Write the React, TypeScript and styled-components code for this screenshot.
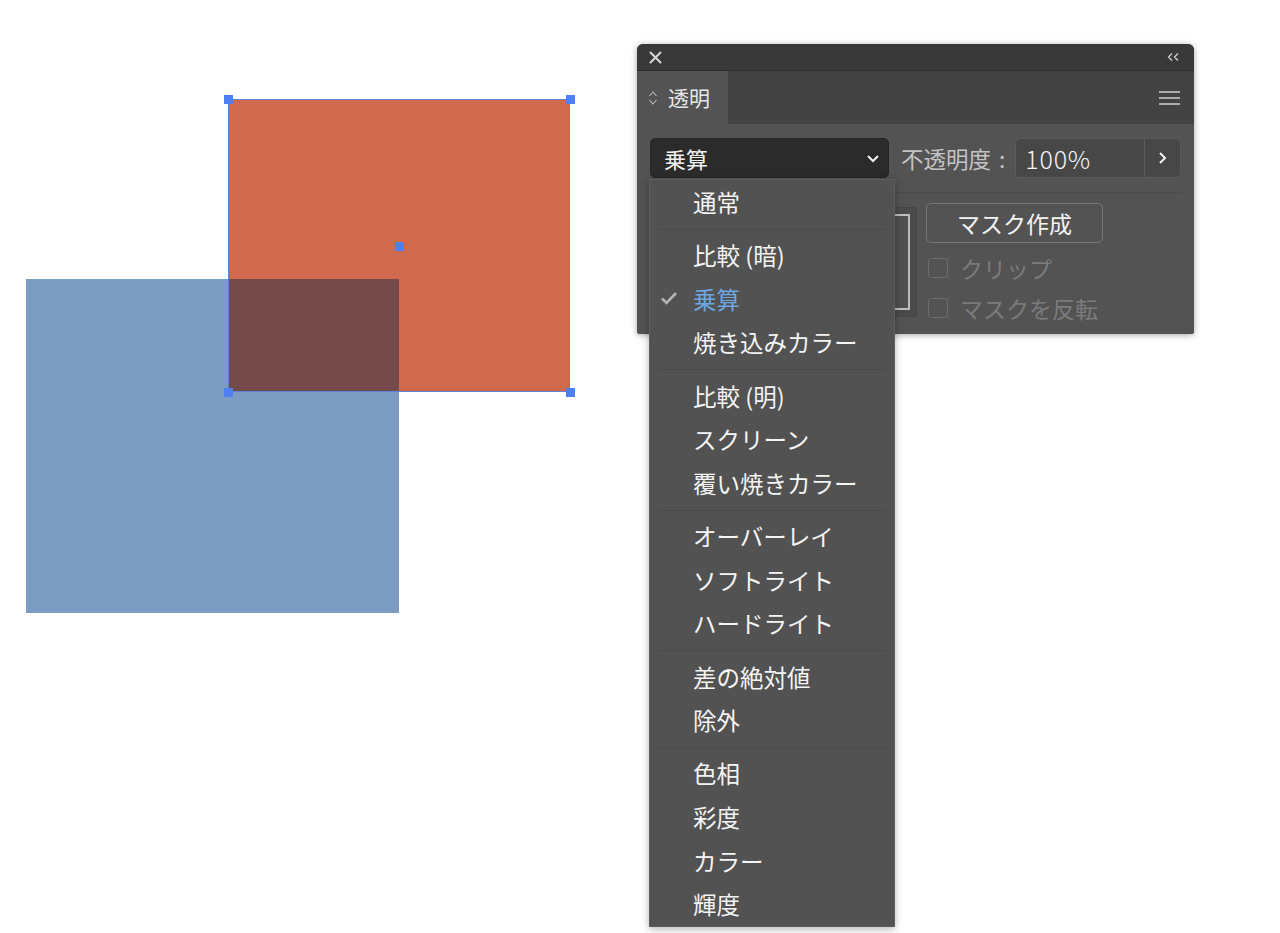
import React from "react";
import styled, { createGlobalStyle } from "styled-components";

const GlobalStyle = createGlobalStyle`
    html, body {
        margin: 0;
        padding: 0;
        background: #ffffff;
    }

    body {
        font-family: "Noto Sans CJK JP", "Noto Sans", sans-serif;
    }
`;

const modes: string[][] = [
    ["通常"],
    ["比較 (暗)", "乗算", "焼き込みカラー"],
    ["比較 (明)", "スクリーン", "覆い焼きカラー"],
    ["オーバーレイ", "ソフトライト", "ハードライト"],
    ["差の絶対値", "除外"],
    ["色相", "彩度", "カラー", "輝度"],
];

const selected = "乗算";

export default function App() {
    return (
        <>
            <GlobalStyle />
            <Canvas>
                <Shape $x={26} $y={279} $w={373} $h={334} $color="#7c9dc1" />
                <Shape $x={229} $y={100} $w={340} $h={291} $color="#cf6a4e" />
                <Shape $x={229} $y={279} $w={170} $h={112} $color="#744a4a" />

                <Selection>
                    <Handle $left="0%" $top="0%" />
                    <Handle $left="100%" $top="0%" />
                    <Handle $left="0%" $top="100%" />
                    <Handle $left="100%" $top="100%" />
                    <Handle $left="50%" $top="50%" />
                </Selection>

                <Panel>
                    <TitleBar>
                        <svg width="13" height="13" viewBox="0 0 13 13">
                            <path d="M1.5 1.5 L11.5 11.5 M11.5 1.5 L1.5 11.5" stroke="#d8d8d8" strokeWidth="2" strokeLinecap="round" />
                        </svg>
                        <svg width="14" height="10" viewBox="0 0 14 10">
                            <path d="M6 1.5 L2.5 5 L6 8.5 M12 1.5 L8.5 5 L12 8.5" stroke="#cfcfcf" strokeWidth="1.3" fill="none" />
                        </svg>
                    </TitleBar>

                    <TabRow>
                        <Tab>
                            <svg width="10" height="18" viewBox="0 0 10 18">
                                <path d="M1.5 7 L5 3 L8.5 7 M1.5 11 L5 15 L8.5 11" stroke="#bdbdbd" strokeWidth="1.1" fill="none" />
                            </svg>
                            透明
                        </Tab>
                        <MenuIcon width="21" height="16" viewBox="0 0 21 16">
                            <path d="M0 2 H21 M0 8 H21 M0 14 H21" stroke="#cfcfcf" strokeWidth="1.6" />
                        </MenuIcon>
                    </TabRow>

                    <Body>
                        <ControlRow>
                            <Select>
                                乗算
                                <svg width="14" height="9" viewBox="0 0 14 9">
                                    <path d="M2 2 L7 7 L12 2" stroke="#f2f2f2" strokeWidth="2" fill="none" />
                                </svg>
                            </Select>
                            <Label>不透明度 :</Label>
                            <InputGroup>
                                <Input>100%</Input>
                                <StepButton>
                                    <svg width="9" height="14" viewBox="0 0 9 14">
                                        <path d="M2 2 L7 7 L2 12" stroke="#f2f2f2" strokeWidth="2" fill="none" />
                                    </svg>
                                </StepButton>
                            </InputGroup>
                        </ControlRow>

                        <Divider />

                        <MaskRow>
                            <Thumb>
                                <ThumbInner />
                            </Thumb>
                            <Thumb>
                                <ThumbInner />
                            </Thumb>
                            <MaskControls>
                                <MaskButton>マスク作成</MaskButton>
                                <Check>
                                    <Box />
                                    クリップ
                                </Check>
                                <Check>
                                    <Box />
                                    マスクを反転
                                </Check>
                            </MaskControls>
                        </MaskRow>
                    </Body>
                </Panel>

                <Menu>
                    {modes.map((group, gi) => (
                        <React.Fragment key={gi}>
                            {gi > 0 && <Separator />}
                            {group.map((mode) => (
                                <Item key={mode} $active={mode === selected}>
                                    {mode === selected && (
                                        <CheckMark width="18" height="14" viewBox="0 0 18 14">
                                            <path d="M2 7.5 L6.5 12 L16 2" stroke="#b4b4b4" strokeWidth="2.6" fill="none" />
                                        </CheckMark>
                                    )}
                                    {mode}
                                </Item>
                            ))}
                        </React.Fragment>
                    ))}
                </Menu>
            </Canvas>
        </>
    );
}

const Canvas = styled.div`
    position: relative;
    width: 1280px;
    height: 933px;
    overflow: hidden;
    background: #ffffff;
`;

const Shape = styled.div<{ $x: number; $y: number; $w: number; $h: number; $color: string }>`
    position: absolute;
    left: ${(p) => p.$x}px;
    top: ${(p) => p.$y}px;
    width: ${(p) => p.$w}px;
    height: ${(p) => p.$h}px;
    background: ${(p) => p.$color};
`;

const Selection = styled.div`
    position: absolute;
    left: 228px;
    top: 99px;
    width: 342px;
    height: 293px;
    box-shadow: inset 0 0 0 1px #5f82d6;
`;

const Handle = styled.div<{ $left: string; $top: string }>`
    position: absolute;
    left: ${(p) => p.$left};
    top: ${(p) => p.$top};
    width: 9px;
    height: 9px;
    margin: -4px 0 0 -4px;
    background: #4e80f4;
`;

const Panel = styled.div`
    position: absolute;
    left: 637px;
    top: 44px;
    width: 557px;
    height: 290px;

    display: flex;
    flex-direction: column;

    background: #535353;
    border-radius: 6px 6px 2px 2px;
    overflow: hidden;
    box-shadow: 0 1px 6px rgba(0, 0, 0, 0.35);
`;

const TitleBar = styled.div`
    height: 26px;
    flex-shrink: 0;

    display: flex;
    align-items: center;
    justify-content: space-between;

    padding: 0 14px 0 12px;
    background: #393939;
    border-bottom: 1px solid #2c2c2c;
`;

const TabRow = styled.div`
    height: 53px;
    flex-shrink: 0;

    display: flex;
    align-items: stretch;
    justify-content: space-between;

    background: #434343;
`;

const Tab = styled.div`
    width: 91px;

    display: flex;
    align-items: center;
    gap: 10px;

    padding-left: 11px;
    box-sizing: border-box;

    background: #535353;
    color: #e6e6e6;
    font-size: 21px;
    line-height: 1;
`;

const MenuIcon = styled.svg`
    align-self: center;
    margin-right: 14px;
`;

const Body = styled.div`
    flex: 1;
    padding: 14px 13px 0 13px;
`;

const ControlRow = styled.div`
    display: flex;
    align-items: center;
    height: 40px;
`;

const Select = styled.div`
    width: 239px;
    height: 40px;
    box-sizing: border-box;

    display: flex;
    align-items: center;
    justify-content: space-between;

    padding: 0 8px 0 13px;
    background: #2b2b2b;
    border: 1px solid #262626;
    border-radius: 5px;

    color: #f0f0f0;
    font-size: 22px;
`;

const Label = styled.div`
    margin: 0 10px 0 12px;
    color: #c4c4c4;
    font-size: 22.5px;
    word-spacing: 3px;
    white-space: nowrap;
`;

const InputGroup = styled.div`
    flex: 1;
    height: 40px;
    display: flex;

    border: 1px solid #5c5c5c;
    border-radius: 5px;
    background: #474747;
    box-sizing: border-box;
    overflow: hidden;
`;

const Input = styled.div`
    flex: 1;
    display: flex;
    align-items: center;
    padding-left: 9px;

    color: #f4f4f4;
    font-size: 25px;
    font-weight: 300;
    letter-spacing: 0.8px;
    border-right: 1px solid #5c5c5c;
`;

const StepButton = styled.div`
    width: 35px;
    display: flex;
    align-items: center;
    justify-content: center;
`;

const Divider = styled.div`
    height: 1px;
    margin-top: 14px;
    background: #4b4b4b;
`;

const MaskRow = styled.div`
    display: flex;
    align-items: flex-start;
    margin-top: 10px;
`;

const Thumb = styled.div`
    width: 110px;
    height: 110px;
    box-sizing: border-box;
    padding: 6px;
    margin-top: 4px;
    margin-right: 47px;

    background: #4a4a4a;
    border: 1px solid #454545;
    border-radius: 2px;

    &:nth-child(2) {
        margin-right: 9px;
    }
`;

const ThumbInner = styled.div`
    width: 100%;
    height: 100%;
    box-sizing: border-box;
    border: 2px solid #bcbcbc;
    background: #4f4f4f;
`;

const MaskControls = styled.div`
    display: flex;
    flex-direction: column;
    align-items: flex-start;
`;

const MaskButton = styled.div`
    width: 177px;
    height: 40px;
    box-sizing: border-box;
    margin-bottom: 5px;

    display: flex;
    align-items: center;
    justify-content: center;

    border: 1px solid #777777;
    border-radius: 5px;
    color: #f2f2f2;
    font-size: 23px;
`;

const Check = styled.div`
    height: 40px;
    display: flex;
    align-items: center;
    gap: 12px;

    padding-left: 2px;
    color: #7b7b7b;
    font-size: 23px;
`;

const Box = styled.div`
    width: 20px;
    height: 20px;
    box-sizing: border-box;
    border: 1.5px solid #6c6c6c;
    border-radius: 3px;
`;

const Menu = styled.div`
    position: absolute;
    left: 649px;
    top: 179px;
    width: 246px;
    height: 748px;
    box-sizing: border-box;

    display: flex;
    flex-direction: column;

    background: #525252;
    border: 1px solid #5e5e5e;
    box-shadow: 0 2px 8px rgba(0, 0, 0, 0.3);
`;

const Separator = styled.div`
    height: 1px;
    margin: 5px 8px 4px 8px;
    background: #4a4a4a;
`;

const Item = styled.div<{ $active?: boolean }>`
    position: relative;
    height: 43.6px;
    flex-shrink: 0;

    display: flex;
    align-items: center;
    padding-left: 43px;

    color: ${(p) => (p.$active ? "#6ea7e0" : "#f4f4f4")};
    font-size: 23.5px;
    white-space: nowrap;
`;

const CheckMark = styled.svg`
    position: absolute;
    left: 10px;
    top: 50%;
    margin-top: -8px;
`;
